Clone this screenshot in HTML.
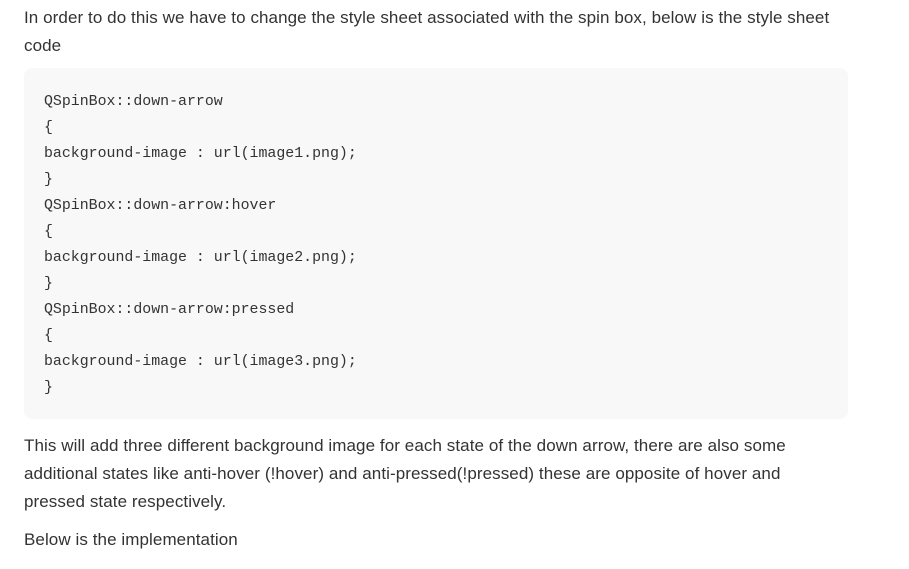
<!DOCTYPE html>
<html><head><style>
body{margin:0;width:909px;height:569px;background:#fff;font-family:"Liberation Sans",sans-serif;color:#333;overflow:hidden;position:relative}
.t{position:absolute;left:24px;font-size:17px;line-height:28px;white-space:nowrap;letter-spacing:0.08px}
.code{position:absolute;left:24px;top:68px;width:824px;height:351px;background:#f8f8f8;border-radius:8px}
.code pre{margin:0;position:absolute;left:20px;top:21px;font-family:"Liberation Mono",monospace;font-size:14.9px;line-height:26px;color:#333}
</style></head><body>
<div class="t" style="top:4px">In order to do this we have to change the style sheet associated with the spin box, below is the style sheet<br>code</div>
<div class="code"><pre>QSpinBox::down-arrow
{
background-image : url(image1.png);
}
QSpinBox::down-arrow:hover
{
background-image : url(image2.png);
}
QSpinBox::down-arrow:pressed
{
background-image : url(image3.png);
}</pre></div>
<div class="t" style="top:432px">This will add three different background image for each state of the down arrow, there are also some<br>additional states like anti-hover (!hover) and anti-pressed(!pressed) these are opposite of hover and<br>pressed state respectively.</div>
<div class="t" style="top:526px">Below is the implementation</div>
</body></html>
